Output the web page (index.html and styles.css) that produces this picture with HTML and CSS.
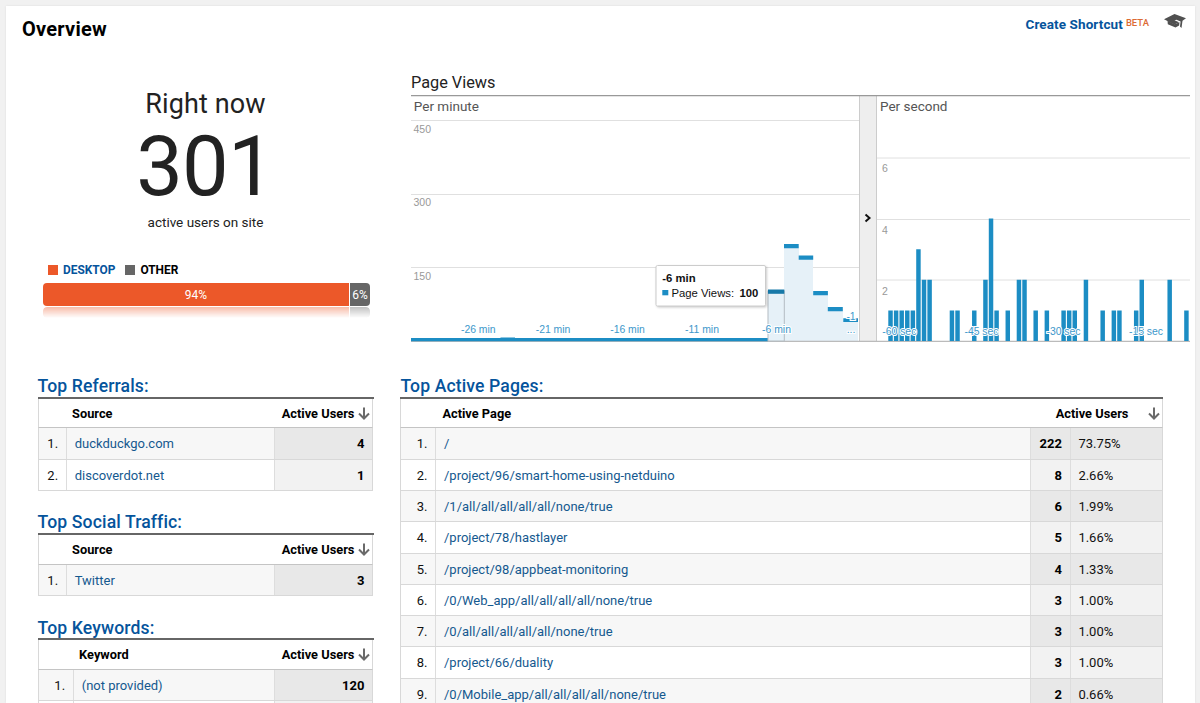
FILE: index.html
```
<!DOCTYPE html>
<html lang="en">
<head>
<meta charset="utf-8">
<title>Overview</title>
<link rel="stylesheet" href="styles.css">
</head>
<body>
<svg class="defs" width="0" height="0">
  <symbol id="sort" viewBox="0 0 12 13"><path d="M6 .5V11M1 6.5l5 5 5-5" fill="none" stroke="#6a6a6a" stroke-width="2"/></symbol>
</svg>
<main class="panel">
  <header class="topbar">
    <h1>Overview</h1>
    <div class="actions">
      <a class="shortcut">Create Shortcut</a><span class="beta">BETA</span>
      <svg class="cap" width="22" height="15" viewBox="0 0 22 15">
        <path d="M0 5.300 10.500 0 22 4.300 18.500 6.800 17.500 14l-1.500-1.400.6-5L12.500 5.800l-2 .4 4.500 2-4.500 2.400z" fill="#505050"/>
        <path d="M3.500 6.500 10.600 10.200l4.900-2-.4 3.400L11.500 13.500 3.800 10.200z" fill="#505050"/>
      </svg>
    </div>
  </header>

  <section class="summary">
    <div class="now">
      <div class="now-title">Right now</div>
      <div class="now-count">301</div>
      <div class="now-sub">active users on site</div>
      <div class="legend"><i class="key desk"></i><span class="desk-label">DESKTOP</span><i class="key other"></i><span>OTHER</span></div>
      <div class="share"><div class="desk">94%</div><div class="other">6%</div></div>
      <div class="mirror"><div class="desk"></div><div class="other"></div></div>
    </div>

    <div class="views">
      <h2>Page Views</h2>
      <svg class="chart" width="780" height="250" viewBox="411 95 780 250">
        <rect x="859" y="96" width="17.500" height="245" fill="#eee"/>
        <path d="M859.500 96V341M876.500 96V341" stroke="#ccc"/>
        <path d="M411 120.500H859M411 194.500H859M411 267.500H859M877 158H1190M877 219.500H1190M877 280H1190" stroke="#e0e0e0"/>
        <path d="M411 95.600H1190" stroke="#999" stroke-width="1.200"/>
        <g class="area">
          <path d="M784 246h15v12h14v35h15v16h15v11h15v21H784z"/>
        </g>
        <path d="M411 341.300H1190" stroke="#aaa"/>
        <g class="bars">
          <path d="M411 338h89.500v-.6H515v.6H768v3.300H411z"/>
          <path d="M784 244h14.700v4.300H784zM798.700 255.500h14.500v4.300h-14.500zM813.200 291h14.700v4.300h-14.700zM827.800 307h15v4.300h-15zM843.300 318.200h14.700v3.800h-14.700z"/>
        </g>
        <g class="bars" transform="translate(888.3 341) scale(5.583 -30.6)">
          <path d="M0 0V1H.8V0zM1 0V1h.8V0zM2 0V1h.8V0zM3 0V1h.8V0zM4 0V1h.8V0zM5 0V3h.8V0zM6 0V2h.8V0zM7 0V2h.8V0zM11 0V1h.8V0zM12 0V1h.8V0zM15 0V1h.8V0zM17 0V2h.8V0zM18 0V4h.8V0zM19 0V1h.8V0zM21 0V1h.8V0zM23 0V2h.8V0zM24 0V2h.8V0zM26 0V1h.8V0zM28 0V1h.8V0zM31 0V1h.8V0zM32 0V1h.8V0zM33 0V1h.8V0zM35 0V2h.8V0zM38 0V1h.8V0zM40 0V1h.8V0zM41 0V1h.8V0zM44 0V1h.8V0zM45 0V2h.8V0zM50 0V2h.8V0zM53 0V1h.8V0z"/>
        </g>
        <g class="hover">
          <rect x="768" y="291" width="16.300" height="50" fill="#e6f1f8" stroke="#b3bcc2"/>
          <path d="M768 289.500h16.300v4.300H768z" fill="#1779a8"/>
        </g>
        <g class="panel-name"><text x="413.800" y="111.400">Per minute</text><text x="880" y="111.400">Per second</text></g>
        <g class="y-label">
          <text x="413.500" y="133.300">450</text><text x="413.500" y="206.300">300</text><text x="413.500" y="280">150</text>
          <text x="882" y="172.300">6</text><text x="882" y="233.700">4</text><text x="882" y="294.500">2</text>
        </g>
        <g class="x-label">
          <text x="478.300" y="333.300">-26 min</text><text x="553" y="333.300">-21 min</text><text x="627.500" y="333.300">-16 min</text><text x="702" y="333.300">-11 min</text><text x="776.500" y="333.300">-6 min</text><text x="851" y="320">-1</text><text x="851" y="333.300">...</text>
          <text x="899.300" y="335">-60 sec</text><text x="981.500" y="335">-45 sec</text><text x="1063.500" y="335">-30 sec</text><text x="1146" y="335">-15 sec</text>
        </g>
        <path d="M865.500 214.500l4 3.500-4 3.500" fill="none" stroke="#111" stroke-width="2"/>
        <g class="tip">
          <rect x="656" y="265.500" width="109.500" height="40.500" rx="1.500" fill="#fff" stroke="#ccc"/>
          <text class="strong" x="662.300" y="282">-6 min</text>
          <rect x="662.300" y="290" width="6" height="5.300" fill="#1c8dc4"/>
          <text x="671.500" y="297">Page Views:</text><text class="strong" x="739.500" y="297">100</text>
        </g>
      </svg>
    </div>
  </section>

  <section class="tables">
    <div class="side">
      <div class="card"><h3>Top Referrals:</h3>
        <div class="grid">
          <div class="row head"><b class="name">Source</b><b class="users">Active Users</b><svg class="sort"><use href="#sort"/></svg></div>
          <div class="row"><span class="num">1.</span><a class="name">duckduckgo.com</a><b class="val">4</b></div>
          <div class="row"><span class="num">2.</span><a class="name">discoverdot.net</a><b class="val">1</b></div>
        </div>
      </div>
      <div class="card"><h3>Top Social Traffic:</h3>
        <div class="grid">
          <div class="row head"><b class="name">Source</b><b class="users">Active Users</b><svg class="sort"><use href="#sort"/></svg></div>
          <div class="row"><span class="num">1.</span><a class="name">Twitter</a><b class="val">3</b></div>
        </div>
      </div>
      <div class="card keywords"><h3>Top Keywords:</h3>
        <div class="grid">
          <div class="row head"><b class="name">Keyword</b><b class="users">Active Users</b><svg class="sort"><use href="#sort"/></svg></div>
          <div class="row"><span class="num">1.</span><a class="name">(not provided)</a><b class="val">120</b></div>
          <div class="row"><span class="num"></span><a class="name"></a><b class="val"></b></div>
        </div>
      </div>
    </div>
    <div class="card pages"><h3>Top Active Pages:</h3>
      <div class="grid">
        <div class="row head"><b class="name">Active Page</b><b class="users">Active Users</b><svg class="sort"><use href="#sort"/></svg></div>
        <div class="row"><span class="num">1.</span><a class="name">/</a><b class="val">222</b><span class="pct">73.75%</span></div>
        <div class="row"><span class="num">2.</span><a class="name">/project/96/smart-home-using-netduino</a><b class="val">8</b><span class="pct">2.66%</span></div>
        <div class="row"><span class="num">3.</span><a class="name">/1/all/all/all/all/all/none/true</a><b class="val">6</b><span class="pct">1.99%</span></div>
        <div class="row"><span class="num">4.</span><a class="name">/project/78/hastlayer</a><b class="val">5</b><span class="pct">1.66%</span></div>
        <div class="row"><span class="num">5.</span><a class="name">/project/98/appbeat-monitoring</a><b class="val">4</b><span class="pct">1.33%</span></div>
        <div class="row"><span class="num">6.</span><a class="name">/0/Web_app/all/all/all/all/none/true</a><b class="val">3</b><span class="pct">1.00%</span></div>
        <div class="row"><span class="num">7.</span><a class="name">/0/all/all/all/all/all/none/true</a><b class="val">3</b><span class="pct">1.00%</span></div>
        <div class="row"><span class="num">8.</span><a class="name">/project/66/duality</a><b class="val">3</b><span class="pct">1.00%</span></div>
        <div class="row"><span class="num">9.</span><a class="name">/0/Mobile_app/all/all/all/all/none/true</a><b class="val">2</b><span class="pct">0.66%</span></div>
      </div>
    </div>
  </section>
</main>
</body>
</html>
```
FILE: styles.css
```
* { box-sizing: border-box; }
body { margin: 0; height: 703px; overflow: hidden; padding: 6px 5px 0 6px; background: #f1f1f1; font: 13px/16px Roboto, sans-serif; color: #111; }
h1, h2, h3 { margin: 0; }
.defs { display: block; height: 0; }
.panel { height: 697px; background: #fff; overflow: hidden; box-shadow: 0 0 2px #ddd; }
.topbar { display: flex; justify-content: space-between; height: 64px; padding: 7px 9px 0 16px; }
h1 { font-size: 20px; line-height: 32px; font-weight: 700; color: #000; letter-spacing: .25px; }
.actions { display: flex; align-items: flex-start; }
.shortcut { font-weight: 700; font-size: 13.500px; line-height: 23px; color: #05549c; letter-spacing: .1px; }
.beta { margin-left: 3px; font-size: 9.500px; line-height: 20px; font-weight: 500; color: #dc6b34; }
.cap { margin: 1px 0 0 15px; }

.summary { display: flex; height: 299px; }
.now { width: 399px; padding: 18px 35px 0 37px; color: #222; }
.now-title { text-align: center; font-size: 27px; line-height: 32px; letter-spacing: .1px; margin-right: 2px; }
.now-count { text-align: center; font-size: 83px; line-height: 94px; margin-right: 3px; letter-spacing: -.8px; }
.now-sub { text-align: center; font-size: 13.500px; line-height: 16px; margin-right: 2px; }
.legend { display: flex; align-items: center; height: 16px; margin: 32px 0 5px 5px; font-weight: 700; font-size: 11.900px; color: #000; }
.key { width: 10px; height: 10px; margin-right: 5px; }
.desk { background: #ec5829; }
.other { background: #666; }
.desk-label { color: #05549c; margin-right: 10px; }
.share, .mirror { display: grid; grid-template-columns: 306px 20px; gap: 1px; height: 23px; border-radius: 4px; overflow: hidden; width: 327px; }
.share { color: #fff; font-size: 12px; line-height: 24px; text-align: center; }
.mirror { margin-top: 1px; height: 11px; opacity: .4; mask-image: linear-gradient(#000, transparent); }
.views { padding-top: 1px; margin-left: 6px; }
h2 { font-size: 16.300px; line-height: 24px; font-weight: 400; color: #222; height: 24px; }
.chart { display: block; }
.bars { fill: #1c8dc4; }
.area { fill: #e6f1f8; }
.panel-name { font: 13.500px Roboto, sans-serif; fill: #555; }
.y-label { font: 10.500px "Liberation Sans", sans-serif; fill: #999; }
.x-label { font: 10.400px "Liberation Sans", sans-serif; fill: #3d98cb; text-anchor: middle; stroke: #fff; stroke-width: 2px; paint-order: stroke; }
.tip { font: 11.300px "Liberation Sans", sans-serif; fill: #111; }
.tip > rect:first-child { filter: drop-shadow(1px 1px 1px rgba(0,0,0,.2)); }
.strong { font-weight: 700; }

.tables { display: flex; gap: 26px; padding-left: 31.600px; }
.side { width: 336.800px; }
.card { --num: 28.500px; padding-top: 6px; margin-bottom: 14.400px; }
h3 { height: 21.700px; font-size: 17.600px; line-height: 23px; font-weight: 500; color: #05549c; letter-spacing: .12px; }
.grid { border-top: 2px solid #666; }
.side .keywords { --num: 35.500px; }
.row { display: grid; grid-template-columns: var(--num) 1fr 99px; grid-template-rows: 100%; height: 31.270px; margin-right: 1px; border: solid #d8d8d8; border-width: 0 1px 1px; line-height: 31px; }
.row.head { display: flex; height: 29.800px; border-bottom-color: #c4c4c4; line-height: 30px; color: #000; font-size: 12.800px; }
.head .name { flex: 1; padding-left: calc(var(--num) + 5px); color: #000; }
.sort { width: 12px; height: 13px; margin: 8px 2px 0 4px; }
.row:nth-child(even) { background: #f7f7f7; }
.num { padding-right: 8px; text-align: right; border-right: 1px solid #ddd; }
a.name { padding-left: 7.600px; color: #15598f; }
.val { padding-right: 8px; text-align: right; border-left: 1px solid #ddd; background: #f2f2f2; color: #000; }
.side .row { grid-template-columns: var(--num) 1fr 98px; }
.row:nth-child(even) .val, .row:nth-child(even) .pct { background: #e8e8e8; }
.tables .pages { --num: 35px; width: 763px; }
.pages .row { grid-template-columns: 35px 1fr 40px 92px; margin-right: 0; }
.pages .val { padding-right: 8.500px; }
.pages .head .name { padding-left: 41px; }
.pages .head .sort { margin-left: 20px; margin-right: 2px; }
.pct { padding-left: 7px; border-left: 1px solid #ddd; background: #f2f2f2; }
```
